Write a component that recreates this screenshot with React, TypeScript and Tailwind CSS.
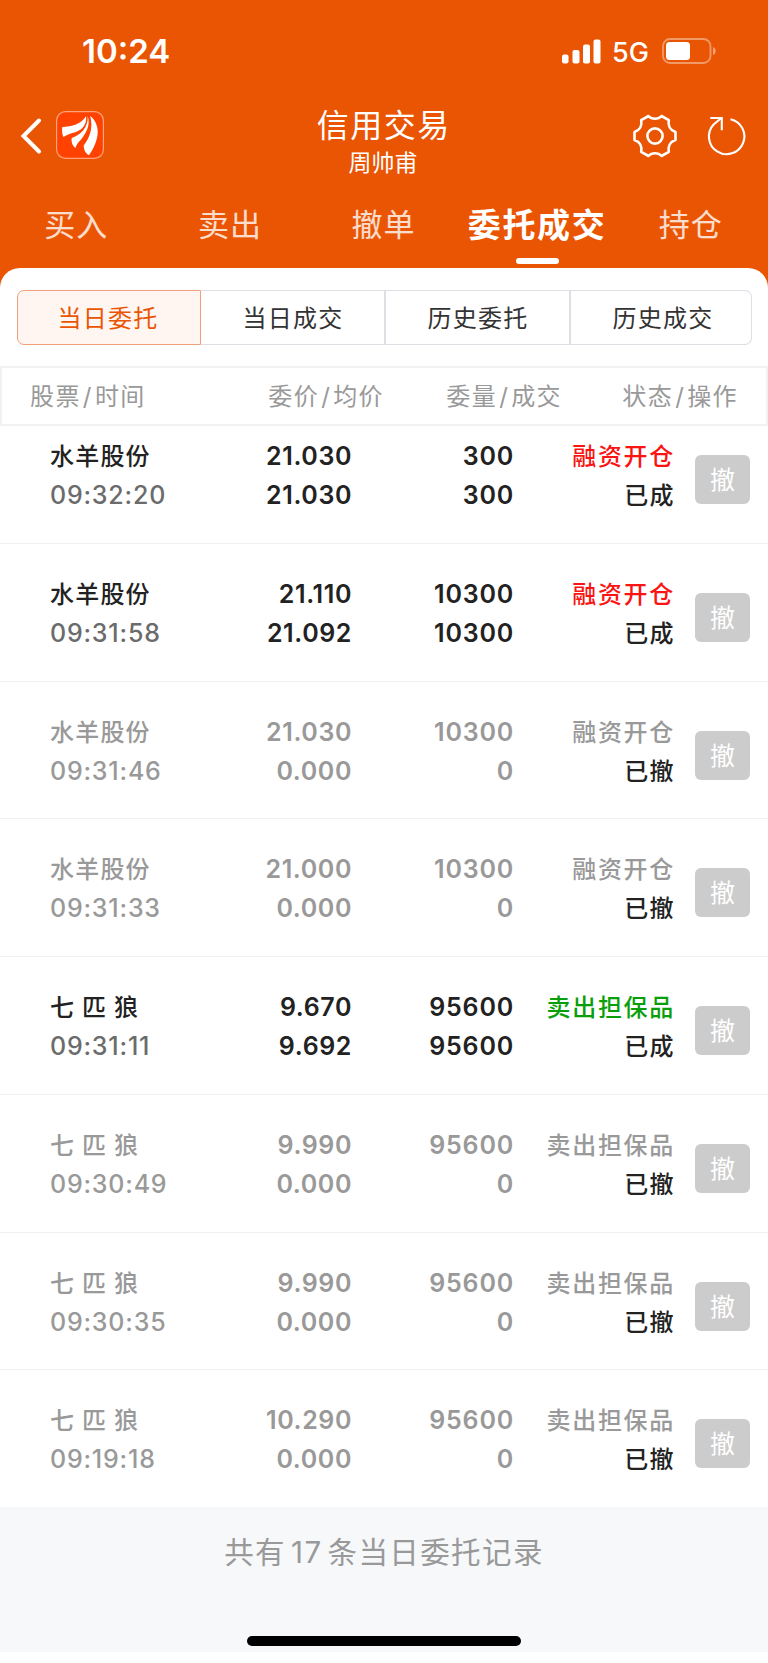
import React from "react";

interface Order {
  name: string;
  time: string;
  price: string;
  avgPrice: string;
  amount: string;
  filled: string;
  action: string;
  kind: "buy" | "sell";
  status: string;
}

const orders: Order[] = [
  { name: "水羊股份", time: "09:32:20", price: "21.030", avgPrice: "21.030", amount: "300", filled: "300", action: "融资开仓", kind: "buy", status: "已成" },
  { name: "水羊股份", time: "09:31:58", price: "21.110", avgPrice: "21.092", amount: "10300", filled: "10300", action: "融资开仓", kind: "buy", status: "已成" },
  { name: "水羊股份", time: "09:31:46", price: "21.030", avgPrice: "0.000", amount: "10300", filled: "0", action: "融资开仓", kind: "buy", status: "已撤" },
  { name: "水羊股份", time: "09:31:33", price: "21.000", avgPrice: "0.000", amount: "10300", filled: "0", action: "融资开仓", kind: "buy", status: "已撤" },
  { name: "七 匹 狼", time: "09:31:11", price: "9.670", avgPrice: "9.692", amount: "95600", filled: "95600", action: "卖出担保品", kind: "sell", status: "已成" },
  { name: "七 匹 狼", time: "09:30:49", price: "9.990", avgPrice: "0.000", amount: "95600", filled: "0", action: "卖出担保品", kind: "sell", status: "已撤" },
  { name: "七 匹 狼", time: "09:30:35", price: "9.990", avgPrice: "0.000", amount: "95600", filled: "0", action: "卖出担保品", kind: "sell", status: "已撤" },
  { name: "七 匹 狼", time: "09:19:18", price: "10.290", avgPrice: "0.000", amount: "95600", filled: "0", action: "卖出担保品", kind: "sell", status: "已撤" },
];

const tabs = ["买入", "卖出", "撤单", "委托成交", "持仓"];
const segments = ["当日委托", "当日成交", "历史委托", "历史成交"];

const StatusBar: React.FC = () => (
  <div className="flex h-[102px] items-center justify-between pl-[82px] pr-[52px] text-white">
    <span className="mt-[1px] text-[33px] font-semibold leading-none">10:24</span>
    <div className="flex items-center">
      <svg width="39" height="25" viewBox="0 0 39 25" fill="currentColor">
        <rect x="0" y="15.5" width="6.5" height="9" rx="2" />
        <rect x="10.5" y="11" width="7" height="13.5" rx="2" />
        <rect x="21" y="5.5" width="7" height="19" rx="2" />
        <rect x="31.5" y="0.5" width="7" height="24" rx="2" />
      </svg>
      <span className="ml-[11px] mt-[2px] w-[50px] whitespace-nowrap text-[27px] font-medium leading-none">5G</span>
      <svg width="54" height="26" viewBox="0 0 54 26" fill="none">
        <rect x="1" y="1" width="47.5" height="24" rx="7" stroke="#fff" strokeOpacity="0.4" strokeWidth="1.8" />
        <rect x="4" y="4" width="24" height="18" rx="3.5" fill="#fff" />
        <path d="M51 9v8c1.6-.7 2.7-2.2 2.7-4s-1.1-3.3-2.7-4z" fill="#fff" fillOpacity="0.45" />
      </svg>
    </div>
  </div>
);

const Logo: React.FC = () => (
  <svg width="48" height="48" viewBox="0 0 48 48">
    <rect x="0.6" y="0.6" width="46.8" height="46.8" rx="9" fill="#ff4200" stroke="#ffa27c" strokeWidth="1.2" />
    <g fill="#fff">
      <path d="M6.3 16C16 15.500 25 13 30 5.200C31 12 27.500 18 20.500 20.700C14.500 22.500 11 23.500 7.500 26C6 23 5.800 19.500 6.300 16Z" />
      <path d="M31.700 5C34.500 13 31 21 25.500 28C22.500 31.500 20.500 33 19.300 37C16.500 34.500 15 31.500 15.700 27C24 24 32.500 17 31.700 5Z" />
      <path d="M34.200 5C40 9.500 42.500 16.500 41.500 24C40.500 31.500 37 38.500 33 44.300C29.500 42 28 39.500 27.700 34.500C33.500 27 37.500 17 34.200 5Z" />
    </g>
  </svg>
);

const NavBar: React.FC = () => (
  <div className="grid h-[78px] grid-cols-3 text-white">
    <div className="flex items-start pl-[20px] pt-[9px]">
      <svg className="mt-[6px]" width="24" height="38" viewBox="0 0 24 38" fill="none">
        <path d="M19 3.500L3.500 19 19 34.500" stroke="#fff" strokeWidth="4" strokeLinecap="round" strokeLinejoin="miter" />
      </svg>
      <div className="ml-[12px]">
        <Logo />
      </div>
    </div>
    <div className="flex flex-col items-center pr-[2px] pt-[1px]">
      <div className="mr-[-1.5px] text-[32px] leading-[46px] tracking-[1.5px]">信用交易</div>
      <div className="text-[23px] leading-[28px]">周帅甫</div>
    </div>
    <div className="flex items-start justify-end pr-[20px] pt-[11px]">
      <svg width="46" height="46" viewBox="0 0 46 46" fill="none" stroke="#fff" strokeWidth="2.6" strokeLinejoin="round">
        <path d="M16.500 3Q19 5.800 23 5.800T29.500 3L36.800 7.200C35.800 12.500 38 17.200 43.500 19V27C38 28.800 35.800 33.500 36.800 38.800L29.500 43Q27 40.200 23 40.200T16.500 43L9.200 38.800C10.200 33.500 8 28.800 2.500 27V19C8 17.200 10.200 12.500 9.200 7.200Z" />
        <circle cx="23" cy="23" r="7.6" />
      </svg>
      <svg className="ml-[28px]" width="42" height="46" viewBox="0 0 42 46" fill="none" stroke="#fff" strokeWidth="2.1">
        <path d="M24.500 6.200A17.700 17.700 0 1 1 7.600 11.500L14.800 5.500" />
        <path d="M4.300 5H15.800V17.200" />
      </svg>
    </div>
  </div>
);

const Tabs: React.FC = () => (
  <div className="grid h-[88px] grid-cols-5">
    {tabs.map((tab) => {
      const active = tab === "委托成交";
      return (
        <div key={tab} className="flex flex-col items-center">
          <span
            className={
              active
                ? "mt-[21px] mr-[1px] whitespace-nowrap text-[33px] font-bold leading-[48px] tracking-[1.7px] text-white"
                : "mt-[21px] mr-[1px] whitespace-nowrap text-[31px] leading-[48px] tracking-[1px] text-white/80"
            }
          >
            {tab}
          </span>
          {active && <span className="mt-[9px] h-[6px] w-[43px] rounded-full bg-white" />}
        </div>
      );
    })}
  </div>
);

const Segments: React.FC = () => (
  <div className="ml-[17px] mr-[16px] flex h-[55px] text-[24px] leading-[40px] tracking-[1.3px]">
    {segments.map((label, i) => (
      <div
        key={label}
        className={
          i === 0
            ? "flex w-[184px] items-center justify-center rounded-l-[7px] border-[1.5px] border-[#f0a07a] bg-[#fff5f1] pr-[2px] pt-[2px] text-[#ea5504]"
            : i === 3
              ? "flex flex-1 items-center justify-center rounded-r-[7px] border border-l-0 border-[#dedfe5] pl-[4px] pt-[2px] text-[#333]"
              : "flex w-[185px] items-center justify-center border border-l-0 border-r-2 border-[#dedfe5] pl-[1px] pt-[2px] text-[#333]"
        }
      >
        {label}
      </div>
    ))}
  </div>
);

const HeaderCell: React.FC<{ first: string; second: string; className: string }> = ({ first, second, className }) => (
  <span className={className}>
    {first}
    <span className="mx-[2px]">/</span>
    {second}
  </span>
);

const TableHeader: React.FC = () => (
  <div className="mt-[21px] flex h-[60px] items-center border-2 border-[#f2f2f3] pl-[28px] pt-[2px] text-[24px] leading-[40px] tracking-[1.4px] text-[#999]">
    <HeaderCell className="w-[130px]" first="股票" second="时间" />
    <HeaderCell className="w-[224px] text-right" first="委价" second="均价" />
    <HeaderCell className="w-[178px] text-right" first="委量" second="成交" />
    <HeaderCell className="w-[176px] text-right" first="状态" second="操作" />
  </div>
);

const OrderRow: React.FC<{ order: Order }> = ({ order }) => {
  const cancelled = order.status === "已撤";
  const main = cancelled ? "text-[#999]" : "text-[#222]";
  const actionColor = cancelled ? "text-[#999]" : order.kind === "buy" ? "text-[#fa1414]" : "text-[#0a9f0a]";
  return (
    <div className="flex h-[137.75px] items-start border-b border-[#f2f2f2] pl-[50px] pt-[31px] text-[24px] font-medium leading-[39px] tracking-[1.4px]">
      <div className={`w-[150px] ${main}`}>
        <div className="tracking-[1.2px] [word-spacing:-0.8px]">{order.name}</div>
        <div className={cancelled ? "text-[25px] tracking-[0.8px]" : "text-[25px] tracking-[0.8px] text-[#6b6b6b]"}>{order.time}</div>
      </div>
      <div className={`w-[152px] text-right text-[25px] font-semibold tracking-[0.6px] ${main}`}>
        <div>{order.price}</div>
        <div>{order.avgPrice}</div>
      </div>
      <div className={`w-[162px] text-right text-[25px] font-semibold tracking-[0.8px] ${main}`}>
        <div>{order.amount}</div>
        <div>{order.filled}</div>
      </div>
      <div className="w-[161px] text-right">
        <div className={`tracking-[1.7px] ${actionColor}`}>{order.action}</div>
        <div className="text-[#222]">{order.status}</div>
      </div>
      <button className="ml-[20px] mt-[18px] flex h-[49px] w-[55px] items-center justify-center rounded-[6px] bg-[#ccc] pt-[2px] text-[25px] font-normal tracking-normal text-white">
        撤
      </button>
    </div>
  );
};

const App: React.FC = () => {
  return (
    <div
      lang="zh-CN"
      className="flex h-[1663px] w-[768px] flex-col overflow-hidden bg-white font-['Inter','Noto_Sans_CJK_SC',sans-serif]"
    >
      <div className="bg-[#ea5504]">
        <StatusBar />
        <NavBar />
        <Tabs />
        <div className="rounded-t-[20px] bg-white pt-[22px]">
          <Segments />
        </div>
      </div>
      <TableHeader />
      <div className="h-[1081px] overflow-hidden">
        <div className="mt-[-20px]">
          {orders.map((order) => (
            <OrderRow key={order.time} order={order} />
          ))}
        </div>
      </div>
      <div className="flex h-[145px] flex-col items-center bg-[#f7f8fa]">
        <div className="mt-[23px] text-[29.5px] leading-[44px] tracking-[1.4px] text-[#999]">
          共有<span className="mx-[5px]">17</span>条当日委托记录
        </div>
        <div className="mt-[62px] h-[10px] w-[274px] rounded-full bg-black" />
      </div>
    </div>
  );
};

export default App;
